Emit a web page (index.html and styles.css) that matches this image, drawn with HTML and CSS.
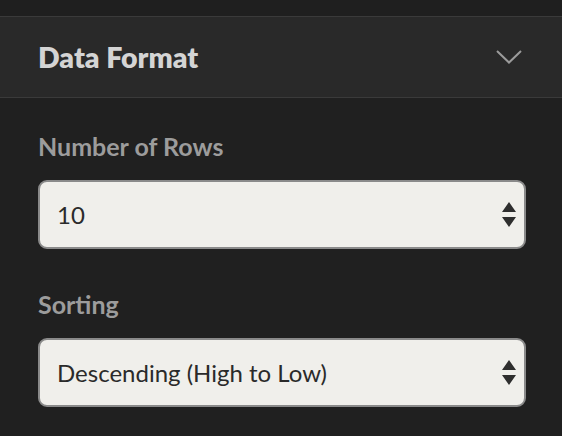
FILE: index.html
```html
<!DOCTYPE html>
<html>
<head>
<meta charset="utf-8">
<link rel="stylesheet" href="styles.css">
</head>
<body>
<div class="top"></div>
<div class="header">
  <div class="title">Data Format</div>
  <svg class="chevron" width="26" height="14" viewBox="0 0 26 14"><path d="M1 1 L13 12.5 L25 1" fill="none" stroke="#9b9b9b" stroke-width="2"/></svg>
</div>
<div class="content">
  <div class="field">
    <div class="label">Number of Rows</div>
    <div class="select"><span class="value">10</span>
      <svg class="arrows" width="14" height="26" viewBox="0 0 14 26"><path d="M7 0 L14 10 L0 10 Z M0 15 L14 15 L7 25 Z" fill="#2e2e2e"/></svg>
    </div>
  </div>
  <div class="field">
    <div class="label">Sorting</div>
    <div class="select"><span class="value">Descending (High to Low)</span>
      <svg class="arrows" width="14" height="26" viewBox="0 0 14 26"><path d="M7 0 L14 10 L0 10 Z M0 15 L14 15 L7 25 Z" fill="#2e2e2e"/></svg>
    </div>
  </div>
</div>
</body>
</html>
```
FILE: styles.css
```css
html, body {
  margin: 0;
  padding: 0;
  background: #202020;
  font-family: "Lato", "Open Sans", sans-serif;
}
.top {
  height: 16px;
  background: #1f1f1f;
}
.header {
  height: 80px;
  background: #292929;
  border-top: 1px solid #3a3a3a;
  border-bottom: 1px solid #3a3a3a;
  display: flex;
  align-items: center;
  justify-content: space-between;
  padding: 0 40px 0 38px;
}
.title {
  font-size: 28.5px;
  font-weight: 800;
  color: #d4d4d4;
}
.chevron {
  display: block;
}
.content {
  padding: 33px 36px 0 38px;
  display: flex;
  flex-direction: column;
  gap: 40px;
}
.field {
  display: flex;
  flex-direction: column;
  gap: 19px;
}
.label {
  font-size: 25px;
  font-weight: 700;
  color: #9c9c9c;
}
.select {
  box-sizing: border-box;
  height: 69px;
  border: 2px solid #8a8a8a;
  border-radius: 9px;
  background: #f0efeb;
  display: flex;
  align-items: center;
  justify-content: space-between;
  padding: 0 8px 0 17px;
}
.value {
  font-size: 24px;
  color: #2a2a2a;
}
.arrows {
  display: block;
}
```
